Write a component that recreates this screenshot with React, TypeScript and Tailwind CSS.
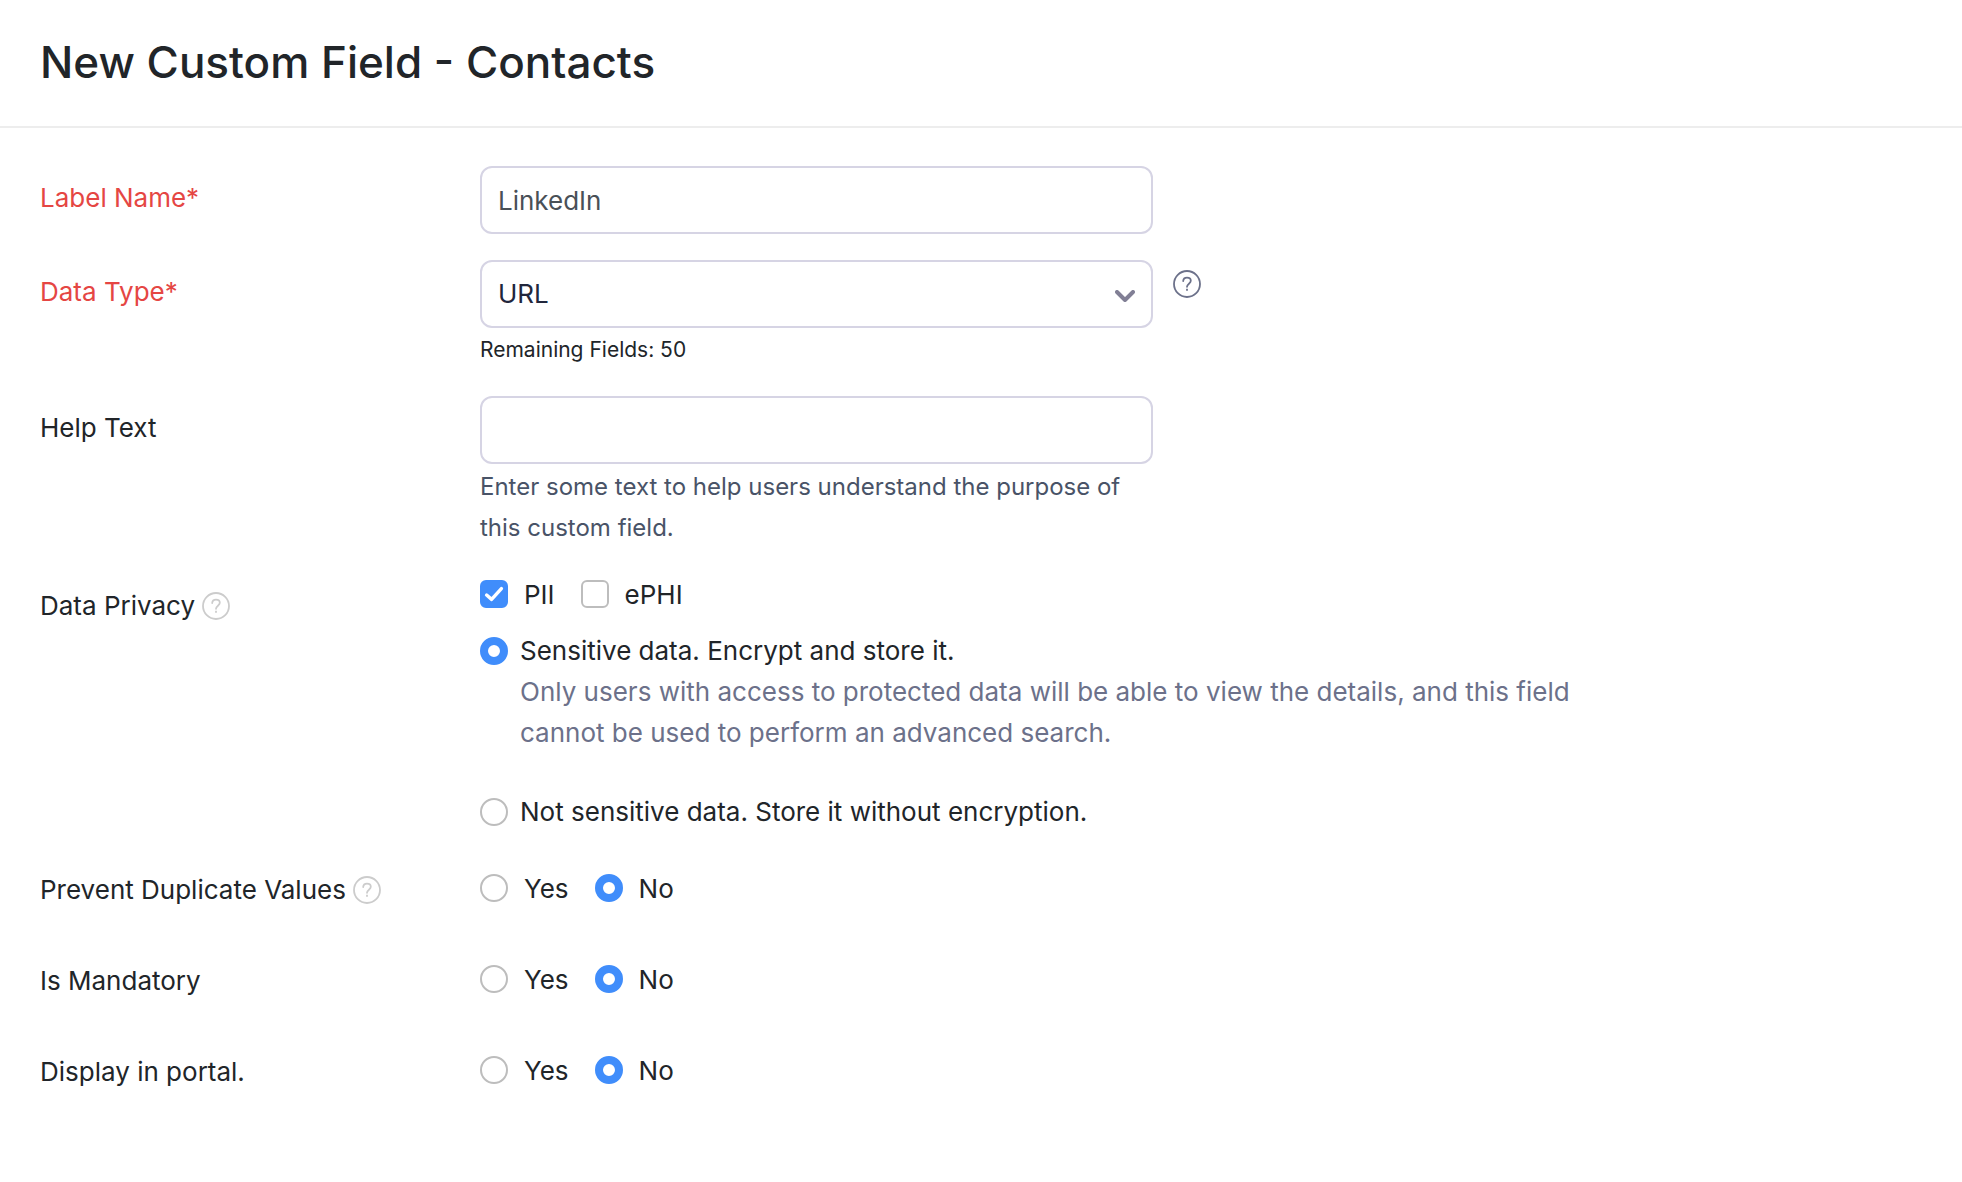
import type { ReactNode } from 'react'

const inputClass =
  'block h-[68px] w-full rounded-xl border-2 border-[#d6d4e4] bg-white px-4 text-[26px] outline-none focus:border-[#408dfb]'

function HelpIcon({ className }: { className: string }) {
  return (
    <svg width="28" height="28" viewBox="0 0 28 28" fill="none" stroke="currentColor" strokeWidth={1.8} className={className}>
      <circle cx="14" cy="14" r="13" />
      <path strokeLinecap="round" strokeLinejoin="round" d="M10.2 11c.1-2.1 1.6-3.4 3.8-3.4s3.8 1.3 3.8 3.2c0 2.8-3.8 3-3.8 6" />
      <path d="M14 18.8v2" />
    </svg>
  )
}

function HelpButton({ label, className }: { label: string; className: string }) {
  return (
    <button type="button" aria-label={label} className="shrink-0">
      <HelpIcon className={className} />
    </button>
  )
}

function Row({ label, children }: { label: ReactNode; children: ReactNode }) {
  return (
    <div className="grid grid-cols-[440px_minmax(0,1fr)] items-start">
      <div className="flex items-center gap-[7px] pb-px leading-[64px]">{label}</div>
      <div>{children}</div>
    </div>
  )
}

function Radio({ id, name, checked }: { id: string; name: string; checked?: boolean }) {
  return (
    <input
      id={id}
      type="radio"
      name={name}
      defaultChecked={checked}
      className="size-7 shrink-0 appearance-none rounded-full border-2 border-[#bdbdbd] bg-white checked:border-8 checked:border-[#408dfb]"
    />
  )
}

function Checkbox({ label, checked }: { label: string; checked?: boolean }) {
  return (
    <label className="flex items-center gap-4">
      <span className="relative size-7">
        <input
          type="checkbox"
          defaultChecked={checked}
          className="peer block size-7 appearance-none rounded-md border-2 border-[#bdbdbd] bg-white checked:border-[#408dfb] checked:bg-[#408dfb]"
        />
        <svg viewBox="0 0 28 28" fill="none" className="pointer-events-none absolute inset-0 hidden stroke-white peer-checked:block">
          <path strokeWidth={3.4} strokeLinecap="round" strokeLinejoin="round" d="M6.6 15l5 4.4L21.4 8.6" />
        </svg>
      </span>
      {label}
    </label>
  )
}

function YesNo({ name, legend }: { name: string; legend: string }) {
  return (
    <div role="radiogroup" aria-label={legend} className="flex h-[60px] items-center gap-[26px]">
      <label className="flex items-center gap-4">
        <Radio id={`${name}-yes`} name={name} />
        Yes
      </label>
      <label className="flex items-center gap-4">
        <Radio id={`${name}-no`} name={name} checked />
        No
      </label>
    </div>
  )
}

export default function App() {
  return (
    <div className="min-h-screen bg-white font-[Inter,sans-serif] text-[26px] text-[#212529]">
      <header className="border-b-2 border-[#ededed] px-10 pt-8 pb-[34px]">
        <h1 className="text-[44px] leading-[60px] font-medium">New Custom Field - Contacts</h1>
      </header>

      <form className="flex flex-col gap-[26px] px-10 pt-[38px] pb-10">
        <Row label={<label htmlFor="label-name" className="text-[#e54643]">Label Name*</label>}>
          <div className="max-w-[673px]">
            <input id="label-name" type="text" defaultValue="LinkedIn" className={`${inputClass} text-[#495057]`} />
          </div>
        </Row>

        <Row label={<label htmlFor="data-type" className="text-[#e54643]">Data Type*</label>}>
          <div className="flex items-start gap-5">
            <div className="relative w-full max-w-[673px]">
              <select id="data-type" defaultValue="URL" className={`${inputClass} appearance-none pb-0.5 text-[#21263c]`}>
                <option>URL</option>
              </select>
              <svg width="20" height="12" viewBox="0 0 20 12" fill="none" className="pointer-events-none absolute top-[30px] right-[18px] text-[#817f95]">
                <path stroke="currentColor" strokeWidth={4} strokeLinecap="round" strokeLinejoin="round" d="M2 2l8 8 8-8" />
              </svg>
            </div>
            <div className="pt-[10px] leading-none">
              <HelpButton label="About data types" className="text-[#6c718a]" />
            </div>
          </div>
          <p className="pt-0.5 text-[21px] leading-10">Remaining Fields: 50</p>
        </Row>

        <Row label={<label htmlFor="help-text">Help Text</label>}>
          <div className="max-w-[673px]">
            <input id="help-text" type="text" aria-describedby="help-text-hint" className={inputClass} />
            <p id="help-text-hint" className="pt-0.5 text-2xl leading-[41px] text-[#495367]">
              Enter some text to help users understand the purpose of this custom field.
            </p>
          </div>
        </Row>

        <Row
          label={
            <>
              <span>Data Privacy</span>
              <HelpButton label="About data privacy" className="text-[#cccccc]" />
            </>
          }
        >
          <div className="flex h-10 items-center gap-[26px]">
            <Checkbox label="PII" checked />
            <Checkbox label="ePHI" />
          </div>
          <div className="mt-4 grid max-w-[1120px] grid-cols-[28px_minmax(0,1fr)] items-center gap-x-3 leading-[41px]">
            <Radio id="sensitive" name="sensitivity" checked />
            <label htmlFor="sensitive">Sensitive data. Encrypt and store it.</label>
            <p className="col-start-2 text-[#6c718a]">
              Only users with access to protected data will be able to view the details, and this field cannot be used to
              perform an advanced search.
            </p>
          </div>
          <div className="mt-[38px] flex items-center gap-3 leading-[41px]">
            <Radio id="not-sensitive" name="sensitivity" />
            <label htmlFor="not-sensitive">Not sensitive data. Store it without encryption.</label>
          </div>
        </Row>

        <Row
          label={
            <>
              <span>Prevent Duplicate Values</span>
              <HelpButton label="About duplicate values" className="text-[#cccccc]" />
            </>
          }
        >
          <YesNo name="prevent-duplicates" legend="Prevent Duplicate Values" />
        </Row>

        <Row label="Is Mandatory">
          <YesNo name="mandatory" legend="Is Mandatory" />
        </Row>

        <Row label="Display in portal.">
          <YesNo name="portal" legend="Display in portal." />
        </Row>
      </form>
    </div>
  )
}
